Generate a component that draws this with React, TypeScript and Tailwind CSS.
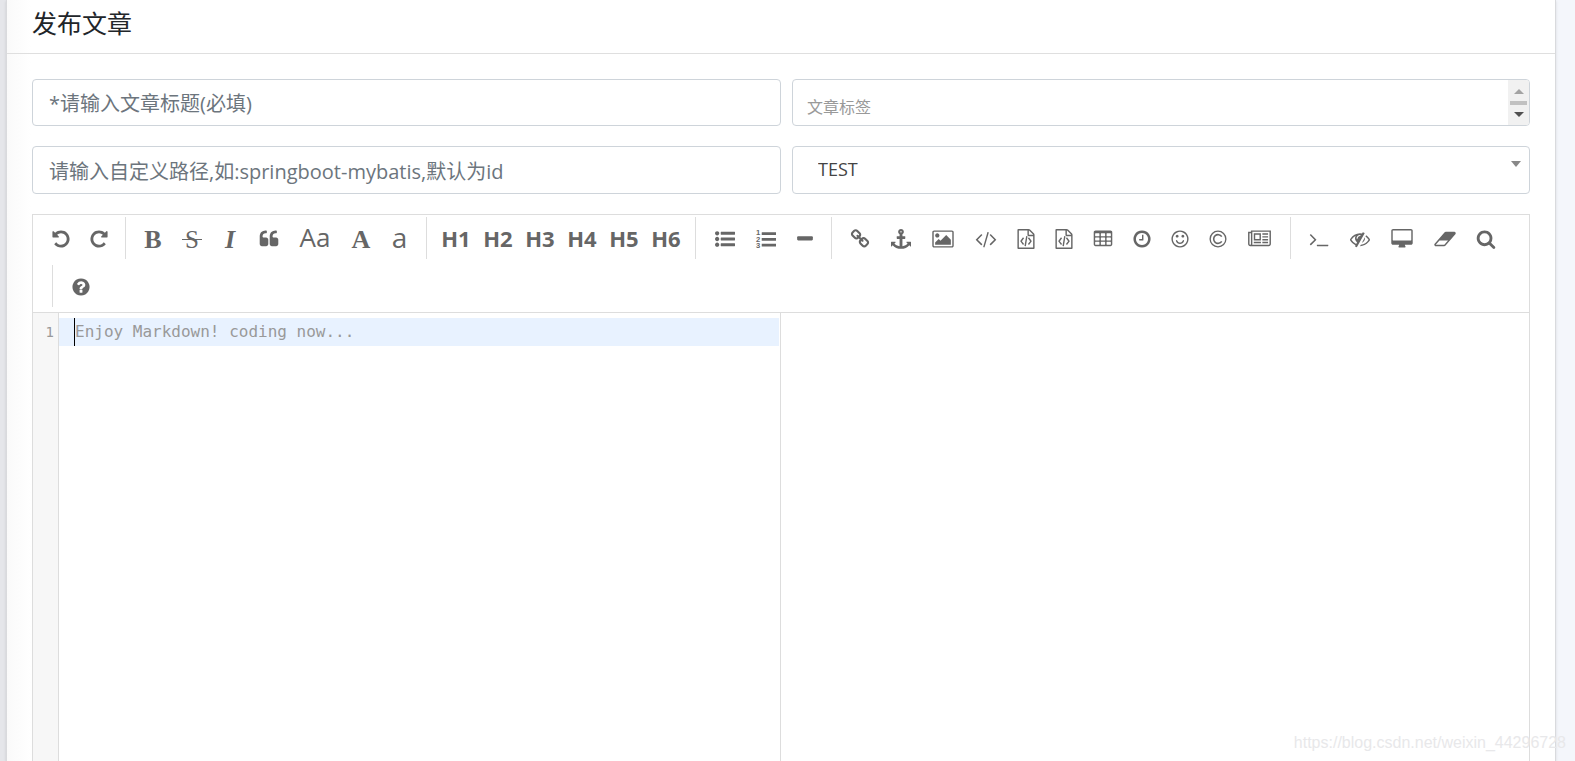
import type { ReactNode } from 'react'

type Tool = { title: string; cell: string; icon: ReactNode }

function Icon({ d, box = '0 0 1792 1792', className = 'w-5' }: { d: string; box?: string; className?: string }) {
  return (
    <svg viewBox={box} className={`h-5 shrink-0 ${className}`} fill="currentColor" fillRule="evenodd" aria-hidden="true">
      <path d={d} />
    </svg>
  )
}

const serif = "font-['Liberation_Serif',serif]"

const fileCode =
  'M1596 380q28 28 48 76t20 88v1152q0 40-28 68t-68 28h-1344q-40 0-68-28t-28-68v-1600q0-40 28-68t68-28h896q40 0 88 20t76 48zm-444-244v376h376q-10-29-22-41l-313-313q-12-12-41-22zm384 1528v-1024h-416q-40 0-68-28t-28-68v-416h-768v1536h1280zm-928-896q8-11 21-12.5t24 6.5l51 38q11 8 12.5 21t-6.5 24l-182 243 182 243q8 11 6.5 24t-12.5 21l-51 38q-11 8-24 6.5t-21-12.5l-226-301q-14-19 0-38zm802 301q14 19 0 38l-226 301q-8 11-21 12.5t-24-6.5l-51-38q-11-8-12.5-21t6.5-24l182-243-182-243q-8-11-6.5-24t12.5-21l51-38q11-8 24-6.5t21 12.5zm-620 461q-13-2-20.5-13t-5.5-24l138-831q2-13 13-20.5t24-5.5l63 10q13 2 20.5 13t5.5 24l-138 831q-2 13-13 20.5t-24 5.5z'

const groups: Tool[][] = [
  [
    {
      title: '撤销',
      cell: 'w-[38px]',
      icon: <Icon d="M1664 896q0 156-61 298t-164 245-245 164-298 61q-172 0-327-72.5t-264-204.5q-7-10-6.5-22.5t8.5-20.5l137-138q10-9 25-9 16 2 23 12 73 95 179 147t225 52q104 0 198.5-40.5t163.5-109.5 109.5-163.5 40.5-198.5-40.5-198.5-109.5-163.5-163.5-109.5-198.5-40.5q-98 0-188 35.5t-160 101.5l137 138q31 30 14 69-17 40-59 40h-448q-26 0-45-19t-19-45v-448q0-42 40-59 39-17 69 14l130 129q107-101 244.5-156.5t284.5-55.5q156 0 298 61t245 164 164 245 61 298z" />,
    },
    {
      title: '重做',
      cell: 'w-[37px]',
      icon: <Icon d="M1664 256v448q0 26-19 45t-45 19h-448q-42 0-59-40-17-39 14-69l138-138q-148-137-349-137-104 0-198.5 40.5t-163.5 109.5-109.5 163.5-40.5 198.5 40.5 198.5 109.5 163.5 163.5 109.5 198.5 40.5q119 0 225-52t179-147q7-10 23-12 15 0 25 9l137 137q9 8 9.5 20.5t-7.5 22.5q-109 132-264 204.5t-327 72.5q-156 0-298-61t-245-164-164-245-61-298 61-298 164-245 245-164 298-61q147 0 284.5 55.5t244.5 156.5l130-129q29-31 70-14 39 17 39 59z" />,
    },
  ],
  [
    { title: '粗体', cell: 'w-[38px]', icon: <span className={`${serif} pt-0.5 text-[26px] leading-5 font-bold`}>B</span> },
    {
      title: '删除线',
      cell: 'w-[40px]',
      icon: (
        <span className={`${serif} relative w-5 pt-0.5 text-[25px] leading-5 before:absolute before:inset-x-0 before:top-[11px] before:h-px before:bg-[#666]`}>
          S
        </span>
      ),
    },
    { title: '斜体', cell: 'w-[36px]', icon: <span className={`${serif} pt-0.5 text-[26px] leading-5 font-bold italic`}>I</span> },
    {
      title: '引用',
      cell: 'w-[41px]',
      icon: <Icon d="M832 960v384q0 80-56 136t-136 56h-384q-80 0-136-56t-56-136v-704q0-104 40.5-198.5t109.5-163.5 163.5-109.5 198.5-40.5h64q26 0 45 19t19 45v128q0 26-19 45t-45 19h-64q-106 0-181 75t-75 181v32q0 40 28 68t68 28h224q80 0 136 56t56 136zm896 0v384q0 80-56 136t-136 56h-384q-80 0-136-56t-56-136v-704q0-104 40.5-198.5t109.5-163.5 163.5-109.5 198.5-40.5h64q26 0 45 19t19 45v128q0 26-19 45t-45 19h-64q-106 0-181 75t-75 181v32q0 40 28 68t68 28h224q80 0 136 56t56 136z" />,
    },
    { title: '单词首字母大写', cell: 'w-[52px]', icon: <span className="pb-1 text-[26px] leading-5">Aa</span> },
    { title: '转换成大写', cell: 'w-[40px]', icon: <span className={`${serif} pt-0.5 text-[26px] leading-5 font-bold`}>A</span> },
    { title: '转换成小写', cell: 'w-[37px]', icon: <span className="pb-1 text-[28px] leading-5">a</span> },
  ],
  ['H1', 'H2', 'H3', 'H4', 'H5', 'H6'].map((h) => ({
    title: h,
    cell: 'w-[42px]',
    icon: <span className="pb-0.5 text-[22px] leading-5 font-bold">{h}</span>,
  })),
  [
    {
      title: '无序列表',
      cell: 'w-[41px]',
      icon: <Icon d="M384 1408q0 80-56 136t-136 56-136-56-56-136 56-136 136-56 136 56 56 136zm0-512q0 80-56 136t-136 56-136-56-56-136 56-136 136-56 136 56 56 136zm1408 416v192q0 13-9.5 22.5t-22.5 9.5h-1216q-13 0-22.5-9.5t-9.5-22.5v-192q0-13 9.5-22.5t22.5-9.5h1216q13 0 22.5 9.5t9.5 22.5zm-1408-928q0 80-56 136t-136 56-136-56-56-136 56-136 136-56 136 56 56 136zm1408 416v192q0 13-9.5 22.5t-22.5 9.5h-1216q-13 0-22.5-9.5t-9.5-22.5v-192q0-13 9.5-22.5t22.5-9.5h1216q13 0 22.5 9.5t9.5 22.5zm0-512v192q0 13-9.5 22.5t-22.5 9.5h-1216q-13 0-22.5-9.5t-9.5-22.5v-192q0-13 9.5-22.5t22.5-9.5h1216q13 0 22.5 9.5t9.5 22.5z" />,
    },
    {
      title: '有序列表',
      cell: 'w-[41px]',
      icon: (
        <svg viewBox="0 0 1792 1792" className="h-5 w-5 overflow-visible font-['Liberation_Sans',sans-serif] font-bold" fill="currentColor" aria-hidden="true">
          <path d="M544 288h1248v256H512V320zM512 800h1280v256H512zM512 1312h1280v256H512z" />
          <text x="0" y="530" fontSize="680">1</text>
          <text x="0" y="1120" fontSize="680">2</text>
          <text x="0" y="1740" fontSize="680">3</text>
        </svg>
      ),
    },
    {
      title: '横线',
      cell: 'w-[37px]',
      icon: <Icon d="M1600 736v192q0 40-28 68t-68 28h-1216q-40 0-68-28t-28-68v-192q0-40 28-68t68-28h1216q40 0 68 28t28 68z" />,
    },
  ],
  [
    {
      title: '链接',
      cell: 'w-[40px]',
      icon: <Icon d="M1520 1216q0-40-28-68l-208-208q-28-28-68-28-42 0-72 32 3 3 19 18.5t21.5 21.5 15 19 13 25.5 3.5 27.5q0 40-28 68t-68 28q-15 0-27.5-3.5t-25.5-13-19-15-21.5-21.5-18.5-19q-33 31-33 73 0 40 28 68l206 207q27 27 68 27 40 0 68-26l147-146q28-28 28-67zm-703-705q0-40-28-68l-206-207q-28-28-68-28-39 0-68 27l-147 146q-28 28-28 67 0 40 28 68l208 208q27 27 68 27 42 0 72-31-3-3-19-18.5t-21.5-21.5-15-19-13-25.5-3.5-27.5q0-40 28-68t68-28q15 0 27.5 3.5t25.5 13 19 15 21.5 21.5 18.5 19q33-31 33-73zm895 705q0 120-85 203l-147 146q-83 83-203 83-121 0-204-85l-206-207q-83-83-83-203 0-123 88-209l-88-88q-86 88-208 88-120 0-204-84l-208-208q-84-84-84-204t85-203l147-146q83-83 203-83 121 0 204 85l206 207q83 83 83 203 0 123-88 209l88 88q86-88 208-88 120 0 204 84l208 208q84 84 84 204z" />,
    },
    {
      title: '引用链接',
      cell: 'w-[42px]',
      icon: <Icon d="M960 256q0-26-19-45t-45-19-45 19-19 45 19 45 45 19 45-19 19-45zm832 928v352q0 22-20 30-8 2-12 2-12 0-23-9l-93-93q-119 143-318.5 226.5t-429.5 83.5-429.5-83.5-318.5-226.5l-93 93q-9 9-23 9-4 0-12-2-20-8-20-30v-352q0-14 9-23t23-9h352q22 0 30 20 8 19-7 35l-100 100q67 91 189.5 153.5t271.5 82.5v-647h-192q-26 0-45-19t-19-45v-128q0-26 19-45t45-19h192v-163q-58-34-93-92.5t-35-128.5q0-106 75-181t181-75 181 75 75 181q0 70-35 128.5t-93 92.5v163h192q26 0 45 19t19 45v128q0 26-19 45t-45 19h-192v647q149-20 271.5-82.5t189.5-153.5l-100-100q-15-16-7-35 8-20 30-20h352q14 0 23 9t9 23z" />,
    },
    {
      title: '添加图片',
      cell: 'w-[42px]',
      icon: <Icon box="-64 0 1920 1792" className="w-[22px]" d="M576 576q0 80-56 136t-136 56-136-56-56-136 56-136 136-56 136 56 56 136zm1024 384v448h-1408v-192l320-320 160 160 512-512zm96-704h-1600q-13 0-22.5 9.5t-9.5 22.5v1216q0 13 9.5 22.5t22.5 9.5h1600q13 0 22.5-9.5t9.5-22.5v-1216q0-13-9.5-22.5t-22.5-9.5zm160 32v1216q0 66-47 113t-113 47h-1600q-66 0-113-47t-47-113v-1216q0-66 47-113t113-47h1600q66 0 113 47t47 113z" />,
    },
    {
      title: '行内代码',
      cell: 'w-[43px]',
      icon: <Icon box="64 0 1920 1792" className="w-[22px]" d="M681 1399l-50 50q-10 10-23 10t-23-10l-466-466q-10-10-10-23t10-23l466-466q10-10 23-10t23 10l50 50q10 10 10 23t-10 23l-393 393 393 393q10 10 10 23t-10 23zm591-1067l-373 1291q-4 13-15.5 19.5t-23.5 2.5l-62-17q-13-4-19.5-15.5t-2.5-24.5l373-1291q4-13 15.5-19.5t23.5-2.5l62 17q13 4 19.5 15.5t2.5 24.5zm657 651l-466 466q-10 10-23 10t-23-10l-50-50q-10-10-10-23t10-23l393-393-393-393q-10-10-10-23t10-23l50-50q10-10 23-10t23 10l466 466q10 10 10 23t-10 23z" />,
    },
    { title: '预格式文本', cell: 'w-[38px]', icon: <Icon d={fileCode} /> },
    { title: '代码块', cell: 'w-[38px]', icon: <Icon d={fileCode} /> },
    {
      title: '添加表格',
      cell: 'w-[40px]',
      icon: <Icon d="M1728 288v1088q0 66-47 113t-113 47h-1344q-66 0-113-47t-47-113v-1088q0-66 47-113t113-47h1344q66 0 113 47t47 113zM192 416v192q0 32 32 32h320q32 0 32-32v-192q0-32-32-32h-320q-32 0-32 32zm0 384v192q0 32 32 32h320q32 0 32-32v-192q0-32-32-32h-320q-32 0-32 32zm0 384v192q0 32 32 32h320q32 0 32-32v-192q0-32-32-32h-320q-32 0-32 32zM704 416v192q0 32 32 32h320q32 0 32-32v-192q0-32-32-32h-320q-32 0-32 32zm0 384v192q0 32 32 32h320q32 0 32-32v-192q0-32-32-32h-320q-32 0-32 32zm0 384v192q0 32 32 32h320q32 0 32-32v-192q0-32-32-32h-320q-32 0-32 32zM1216 416v192q0 32 32 32h320q32 0 32-32v-192q0-32-32-32h-320q-32 0-32 32zm0 384v192q0 32 32 32h320q32 0 32-32v-192q0-32-32-32h-320q-32 0-32 32zm0 384v192q0 32 32 32h320q32 0 32-32v-192q0-32-32-32h-320q-32 0-32 32z" />,
    },
    {
      title: '日期时间',
      cell: 'w-[38px]',
      icon: <Icon d="M1024 544v448q0 14-9 23t-23 9h-320q-14 0-23-9t-9-23v-64q0-14 9-23t23-9h224v-352q0-14 9-23t23-9h64q14 0 23 9t9 23zm416 352q0-148-73-273t-198-198-273-73-273 73-198 198-73 273 73 273 198 198 273 73 273-73 198-198 73-273zm224 0q0 209-103 385.5t-279.5 279.5-385.5 103-385.5-103-279.5-279.5-103-385.5 103-385.5 279.5-279.5 385.5-103 385.5 103 279.5 279.5 103 385.5z" />,
    },
    {
      title: 'Emoji 表情',
      cell: 'w-[38px]',
      icon: <Icon d="M1262 1075q-37 121-138 195t-228 74-228-74-138-195q-8-25 4-48.5t38-31.5q25-8 48.5 4t31.5 38q25 80 92.5 129.5t151.5 49.5 151.5-49.5 92.5-129.5q8-26 32-38t49-4 37 31.5 4 48.5zm-494-435q0 53-37.5 90.5t-90.5 37.5-90.5-37.5-37.5-90.5 37.5-90.5 90.5-37.5 90.5 37.5 37.5 90.5zm512 0q0 53-37.5 90.5t-90.5 37.5-90.5-37.5-37.5-90.5 37.5-90.5 90.5-37.5 90.5 37.5 37.5 90.5zm256 256q0-130-51-248.5t-136.5-204-204-136.5-248.5-51-248.5 51-204 136.5-136.5 204-51 248.5 51 248.5 136.5 204 204 136.5 248.5 51 248.5-51 204-136.5 136.5-204 51-248.5zm128 0q0 209-103 385.5t-279.5 279.5-385.5 103-385.5-103-279.5-279.5-103-385.5 103-385.5 279.5-279.5 385.5-103 385.5 103 279.5 279.5 103 385.5z" />,
    },
    {
      title: 'HTML 实体字符',
      cell: 'w-[38px]',
      icon: (
        <svg viewBox="0 0 1792 1792" className="h-5 w-5" fill="none" stroke="currentColor" aria-hidden="true">
          <circle cx="896" cy="896" r="704" strokeWidth="120" />
          <path d="M1230 690A390 390 0 1 0 1230 1102" strokeWidth="140" />
        </svg>
      ),
    },
    {
      title: '插入分页符',
      cell: 'w-[45px]',
      icon: <Icon box="0 0 2048 1792" className="w-[23px]" d="M1024 512h-384v384h384v-384zm128 640v128h-640v-128h640zm0-768v640h-640v-640h640zm640 768v128h-512v-128h512zm0-256v128h-512v-128h512zm0-256v128h-512v-128h512zm0-256v128h-512v-128h512zm-1536 960v-960h-128v960q0 26 19 45t45 19 45-19 19-45zm1664 0v-1088h-1536v1088q0 33-11 64h1483q26 0 45-19t19-45zm128-1216v1216q0 80-56 136t-136 56h-1664q-80 0-136-56t-56-136v-1088h256v-128h1792z" />,
    },
  ],
  [
    {
      title: '跳转到行',
      cell: 'w-[40px]',
      icon: <Icon d="M649 983l-466 466q-10 10-23 10t-23-10l-50-50q-10-10-10-23t10-23l393-393-393-393q-10-10-10-23t10-23l50-50q10-10 23-10t23 10l466 466q10 10 10 23t-10 23zm1079 457v64q0 14-9 23t-23 9h-960q-14 0-23-9t-9-23v-64q0-14 9-23t23-9h960q14 0 23 9t9 23z" />,
    },
    {
      title: '关闭实时预览',
      cell: 'w-[42px]',
      icon: <Icon d="M555 1335l78-141q-87-63-136-159t-49-203q0-121 61-225-229 117-381 353 167 258 427 375zm389-759q0-20-14-34t-34-14q-125 0-214.5 89.5t-89.5 214.5q0 20 14 34t34 14 34-14 14-34q0-86 61-147t147-61q20 0 34-14t14-34zm363-191q0 7-1 9-106 189-316 567t-315 566l-49 89q-10 16-28 16-12 0-134-70-16-10-16-28 0-12 44-87-143-65-263.5-173t-208.5-245q-20-31-20-69t20-69q153-235 380-371t496-136q89 0 180 17l54-97q10-16 28-16 5 0 18 6t31 15.5 33 18.5 31.5 18.5 19.5 11.5q16 10 16 27zm37 447q0 139-79 253.5t-209 164.5l280-502q8 45 8 84zm448 128q0 35-20 69-39 64-109 145-150 172-347.5 267t-419.5 95l74-132q212-18 392.5-137t301.5-307q-115-179-282-294l63-112q95 64 182.5 153t144.5 184q20 34 20 69z" />,
    },
    {
      title: '全窗口预览',
      cell: 'w-[42px]',
      icon: <Icon box="-64 0 1920 1792" className="w-[22px]" d="M1728 992v-832q0-13-9.5-22.5t-22.5-9.5h-1600q-13 0-22.5 9.5t-9.5 22.5v832q0 13 9.5 22.5t22.5 9.5h1600q13 0 22.5-9.5t9.5-22.5zm128-832v1088q0 66-47 113t-113 47h-544q0 37 16 77.5t32 71 16 43.5q0 26-19 45t-45 19h-512q-26 0-45-19t-19-45q0-14 16-44t32-70 16-78h-544q-66 0-113-47t-47-113v-1088q0-66 47-113t113-47h1600q66 0 113 47t47 113z" />,
    },
    {
      title: '清空',
      cell: 'w-[43px]',
      icon: <Icon box="64 0 1920 1792" className="w-[22px]" d="M960 1408l336-384h-768l-336 384h768zm1013-1077q15 34 9.5 71.5t-30.5 65.5l-896 1024q-38 44-96 44h-768q-38 0-69.5-20.5t-47.5-54.5q-15-34-9.5-71.5t30.5-65.5l896-1024q38-44 96-44h768q38 0 69.5 20.5t47.5 54.5z" />,
    },
    {
      title: '搜索',
      cell: 'w-[40px]',
      icon: <Icon d="M1216 832q0-185-131.5-316.5t-316.5-131.5-316.5 131.5-131.5 316.5 131.5 316.5 316.5 131.5 316.5-131.5 131.5-316.5zm512 832q0 52-38 90t-90 38q-54 0-90-38l-343-342q-179 124-399 124-143 0-273.5-55.5t-225-150-150-225-55.5-273.5 55.5-273.5 150-225 225-150 273.5-55.5 273.5 55.5 225 150 150 225 55.5 273.5q0 220-124 399l343 343q37 37 37 90z" />,
    },
  ],
  [
    {
      title: '使用帮助',
      cell: 'w-[40px]',
      icon: <Icon d="M1024 1376v-192q0-14-9-23t-23-9h-192q-14 0-23 9t-9 23v192q0 14 9 23t23 9h192q14 0 23-9t9-23zm256-672q0-88-55.5-163t-138.5-116-170-41q-243 0-371 213-15 24 8 42l132 100q7 6 19 6 16 0 25-12 53-68 86-92 34-24 86-24 48 0 85.5 26t37.5 59q0 38-20 61t-68 45q-63 28-115.5 86.5t-52.5 125.5v36q0 14 9 23t23 9h192q14 0 23-9t9-23q0-19 21.5-49.5t54.5-49.5q32-18 49-28.5t46-35 44.5-48 28-60.5 12.5-81zm384 192q0 209-103 385.5t-279.5 279.5-385.5 103-385.5-103-279.5-279.5-103-385.5 103-385.5 279.5-279.5 385.5-103 385.5 103 279.5 279.5 103 385.5z" />,
    },
  ],
]

function Toolbar() {
  return (
    <div className="flex flex-wrap gap-y-1 border-b border-[#ddd] px-[9px] pt-0.5 pb-[3px] text-[#666]">
      {groups.map((tools, i) => (
        <div key={i} className="flex last:pl-0.5">
          {i > 0 && <div className="mx-2 h-[42px] w-px bg-[#ddd]" />}
          {tools.map((tool) => (
            <button key={tool.title} type="button" title={tool.title} aria-label={tool.title} className={`flex h-11 items-center justify-center ${tool.cell}`}>
              {tool.icon}
            </button>
          ))}
        </div>
      ))}
    </div>
  )
}

function Fields() {
  const field = 'rounded border border-[#ced4da] bg-white outline-none'
  return (
    <div className="flex flex-col gap-5">
      <div className="flex gap-[11px]">
        <input aria-label="文章标题" placeholder="*请输入文章标题(必填)" className={`${field} h-[47px] w-1/2 shrink-0 px-4 pt-0.5 text-xl placeholder:text-[#6c757d]`} />
        <div className="flex h-[47px] flex-1 overflow-hidden rounded border border-[#ced4da] bg-white">
          <input aria-label="文章标签" placeholder="文章标签" className="min-w-0 flex-1 px-3.5 pt-2 text-base outline-none placeholder:text-[#999]" />
          <div className="flex w-[21px] flex-col items-center bg-[#f1f1f1] pt-[9px]">
            <svg viewBox="0 0 10 5" className="h-[5px] w-[10px]" aria-hidden="true">
              <path d="M5 0l5 5H0z" fill="#a3a3a3" />
            </svg>
            <div className="mt-[7px] h-1 w-[17px] bg-[#c1c1c1]" />
            <svg viewBox="0 0 10 5" className="mt-[7px] h-[5px] w-[10px]" aria-hidden="true">
              <path d="M0 0h10L5 5z" fill="#505050" />
            </svg>
          </div>
        </div>
      </div>
      <div className="flex gap-[11px]">
        <input aria-label="自定义路径" placeholder="请输入自定义路径,如:springboot-mybatis,默认为id" className={`${field} h-12 w-1/2 shrink-0 px-4 pt-0.5 text-xl placeholder:text-[#6c757d]`} />
        <div className="relative flex-1">
          <select aria-label="文章分类" className={`${field} h-12 w-full appearance-none pr-8 pb-0.5 pl-[25px] text-lg text-[#444]`}>
            <option>TEST</option>
          </select>
          <svg viewBox="0 0 10 6" className="pointer-events-none absolute top-[15px] right-[9px] h-1.5 w-2.5" aria-hidden="true">
            <path d="M0 0h10L5 6z" fill="#888" />
          </svg>
        </div>
      </div>
    </div>
  )
}

function Editor() {
  return (
    <div className="mt-5 flex flex-1 flex-col border border-b-0 border-[#ddd] bg-white">
      <Toolbar />
      <div className="flex flex-1">
        <div className="flex w-1/2 border-r border-[#ddd] font-['DejaVu_Sans_Mono',monospace]">
          <div className="w-[26px] shrink-0 border-r border-[#ddd] bg-[#f7f7f7] pt-[5px] pr-1 text-right text-sm leading-[28px] text-[#999]">1</div>
          <div className="flex-1 pt-[5px] pr-px">
            <div className="flex h-7 bg-[#e8f2ff] pl-[15px]">
              <div className="w-px bg-black" />
              <textarea
                aria-label="Markdown"
                rows={1}
                placeholder="Enjoy Markdown! coding now..."
                className="h-7 flex-1 resize-none overflow-hidden bg-transparent text-base leading-7 outline-none placeholder:text-[#999]"
              />
            </div>
          </div>
        </div>
        <div className="flex-1" />
      </div>
    </div>
  )
}

export default function App() {
  return (
    <div className="relative flex min-h-screen bg-[#f4f6fb] font-['Open_Sans','Noto_Sans_CJK_SC',sans-serif]">
      <div className="w-1.5 shrink-0 bg-[#e5e6ea]" />
      <main className="mr-[19px] flex flex-1 flex-col border-x border-[#d9dadd] bg-white bg-gradient-to-r from-[#fafafa] to-white to-[24px] shadow-sm">
        <header className="border-b border-[#dfdfdf] px-[25px] pt-1 pb-[11px]">
          <h1 className="text-[25px] leading-[38px] text-[#212529]">发布文章</h1>
        </header>
        <div className="flex flex-1 flex-col px-[25px] pt-[25px]">
          <Fields />
          <Editor />
        </div>
      </main>
      <div className="pointer-events-none absolute right-[9px] bottom-2 font-['Liberation_Sans',sans-serif] text-base leading-5 text-[#e8e8ea]">
        https://blog.csdn.net/weixin_44296728
      </div>
    </div>
  )
}
